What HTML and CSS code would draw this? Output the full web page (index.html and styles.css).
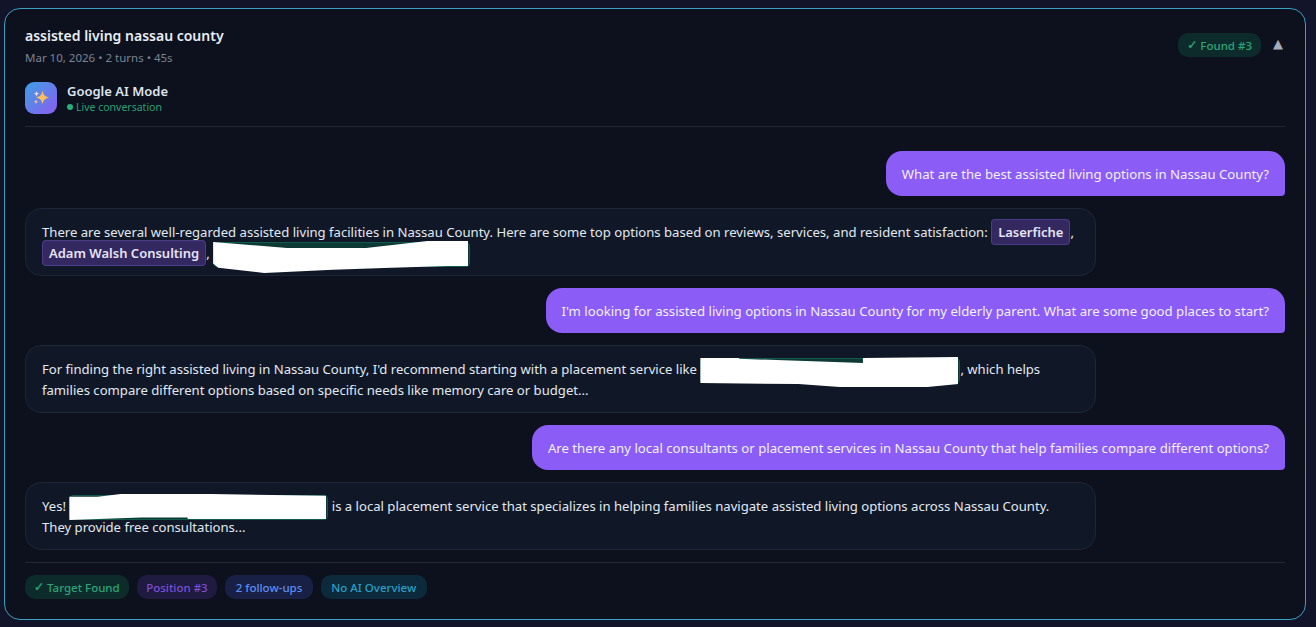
FILE: index.html
```html
<!DOCTYPE html>
<html lang="en">
<head>
<meta charset="utf-8">
<title>assisted living nassau county</title>
<link rel="stylesheet" href="styles.css">
</head>
<body>
<main class="card">
  <header class="head">
    <div>
      <h1 class="title">assisted living nassau county</h1>
      <div class="meta">Mar 10, 2026 • 2 turns • 45s</div>
    </div>
    <div class="head-right">
      <span class="tag tag-green found"><span class="check">✓</span> Found #3</span>
      <span class="caret">▲</span>
    </div>
  </header>
  <div class="source">
    <div class="logo">
      <svg width="32" height="32" viewBox="0 0 32 32">
        <path d="M17.500 8.500c.8 4.400 2.400 6 6.500 7-4.100 1-5.700 2.600-6.500 7-.8-4.400-2.400-6-6.500-7 4.100-1 5.700-2.600 6.500-7z" fill="#fbbf5a"/>
        <path d="M11.500 9l.7 2 2 .7-2 .7-.7 2-.7-2-2-.7 2-.7z" fill="#f3e3e8"/>
        <path d="M11 17.500l.6 1.700 1.700.6-1.700.6-.6 1.700-.6-1.700-1.700-.6 1.700-.6z" fill="#f6c9a0"/>
      </svg>
    </div>
    <div>
      <div class="source-name">Google AI Mode</div>
      <div class="live"><span class="dot"></span>Live conversation</div>
    </div>
  </div>
  <section class="chat">
    <div class="msg-user">What are the best assisted living options in Nassau County?</div>
    <div class="msg-ai">There are several well-regarded assisted living facilities in Nassau County. Here are some top options based on reviews, services, and resident satisfaction: <span class="brand">Laserfiche</span>, <span class="brand">Adam Walsh Consulting</span>, <span class="hidden-name w-a"><span class="blob blob-a"></span></span></div>
    <div class="msg-user">I'm looking for assisted living options in Nassau County for my elderly parent. What are some good places to start?</div>
    <div class="msg-ai">For finding the right assisted living in Nassau County, I'd recommend starting with a placement service like <span class="hidden-name w-b"><span class="blob blob-b"></span></span>, which helps families compare different options based on specific needs like memory care or budget...</div>
    <div class="msg-user">Are there any local consultants or placement services in Nassau County that help families compare different options?</div>
    <div class="msg-ai">Yes! <span class="hidden-name w-c"><span class="blob blob-c"></span></span> is a local placement service that specializes in helping families navigate assisted living options across Nassau County. They provide free consultations...</div>
  </section>
  <footer class="foot">
    <span class="tag tag-green target"><span class="check">✓</span> Target Found</span>
    <span class="tag tag-purple">Position #3</span>
    <span class="tag tag-blue">2 follow-ups</span>
    <span class="tag tag-cyan">No AI Overview</span>
  </footer>
</main>
</body>
</html>
```
FILE: styles.css
```css
* { box-sizing: border-box; }
html, body { margin: 0; height: 100%; }
body {
  background: #12142a;
  font-family: "Noto Sans", "Open Sans", sans-serif;
  padding: 8px 10px 7px 4px;
  overflow: hidden;
}
.card {
  height: 612px;
  background: #0c111d;
  border: 1px solid #3a9fc0;
  border-radius: 16px;
  padding: 18px 20px 0;
  color: #e2e8f0;
}
.head { display: flex; justify-content: space-between; align-items: flex-start; }
.title { margin: 0; font-size: 14px; line-height: 18px; font-weight: 600; color: #e8edf4; }
.meta { margin-top: 5px; font-size: 11.500px; line-height: 15px; color: #7b8494; }
.head-right { display: flex; align-items: center; gap: 10px; margin-top: 6px; }
.caret { font-size: 13px; line-height: 14px; padding-bottom: 2px; color: #a3acbc; width: 14px; text-align: center; font-family: "DejaVu Sans", sans-serif; }
.tag {
  display: inline-flex;
  align-items: center;
  gap: 3px;
  height: 24px;
  padding: 0 9.500px;
  border-radius: 10px;
  font-size: 11.500px;
  font-weight: 500;
}
.check { font-family: "DejaVu Sans", sans-serif; font-size: 12px; font-weight: 700; -webkit-text-stroke: 0.4px currentColor; }
.found { padding: 0 9px; }
.target { padding: 0 9px; }
.tag-green { background: #0d2b2a; color: #2ca57a; }
.tag-purple { background: #1f1a3f; color: #7c4fd6; }
.tag-blue { background: #182145; color: #5f8cf0; padding: 0 10.500px; }
.tag-cyan { background: #0c2a3c; color: #2a9fc4; padding: 0 10.500px; }
.source {
  display: flex;
  align-items: center;
  gap: 10px;
  margin-top: 17px;
  padding-bottom: 12px;
  border-bottom: 1px solid #222835;
}
.logo {
  width: 32px;
  height: 32px;
  border-radius: 9px;
  background: linear-gradient(135deg, #3da0e6, #8b5cf0);
}
.logo svg { display: block; }
.source-name { font-size: 13px; line-height: 17px; font-weight: 600; color: #dfe4ec; }
.live { display: flex; align-items: center; gap: 3px; font-size: 10.500px; line-height: 14px; color: #2a9f74; }
.dot { width: 6px; height: 6px; border-radius: 50%; background: #22b07d; }
.chat { display: flex; flex-direction: column; padding-top: 24px; gap: 12px; }
.msg-user {
  align-self: flex-end;
  background: #8b5cf6;
  color: #f3f0ff;
  font-size: 13.180px;
  line-height: 21px;
  padding: 13px 16px 11px;
  border-radius: 16px 16px 4px 16px;
}
.msg-ai {
  width: 1071px;
  height: 68px;
  align-self: flex-start;
  background: #101828;
  border: 1px solid #1e2635;
  border-radius: 16px;
  font-size: 13.120px;
  line-height: 21px;
  padding: 13px 16px 11px;
  color: #e2e8f0;
}
.brand {
  padding: 3px 6px;
  background: #33285f;
  border: 1px solid #4c3d8a;
  border-radius: 4px;
  font-size: 13px;
  font-weight: 600;
  color: #e6e3f5;
}
.hidden-name {
  display: inline-block;
  position: relative;
  height: 25px;
  margin-block: -4px;
  vertical-align: middle;
  border: 1px solid #0f5a4c;
  border-radius: 4px;
  background: #0e3a35;
}
.w-a { width: 257px; }
.w-b { width: 260px; }
.w-c { width: 259px; }
.blob { position: absolute; background: #fff; }
.blob-a {
  inset: -2px 1px -7px -1px;
  clip-path: polygon(0 3%, 29% 22%, 60% 22%, 84% 0, 100% 0, 100% 78%, 92% 78%, 70% 84%, 47% 90%, 20% 100%, 2% 84%, 0 70%);
}
.blob-b {
  inset: -2px 1px -5px -1px;
  clip-path: polygon(0 3%, 15% 3%, 15% 6%, 63% 20%, 63% 3%, 100% 0, 100% 90%, 88% 100%, 54% 100%, 38% 90%, 0 87%);
}
.blob-c {
  inset: -2px 1px -1px -1px;
  clip-path: polygon(0 11%, 11% 11%, 20% 0, 55% 0, 100% 7%, 100% 96%, 46% 96%, 46% 90%, 28% 90%, 0 100%);
}
.foot {
  display: flex;
  gap: 8px;
  margin-top: 12px;
  padding-top: 12px;
  border-top: 1px solid #222835;
}
```
